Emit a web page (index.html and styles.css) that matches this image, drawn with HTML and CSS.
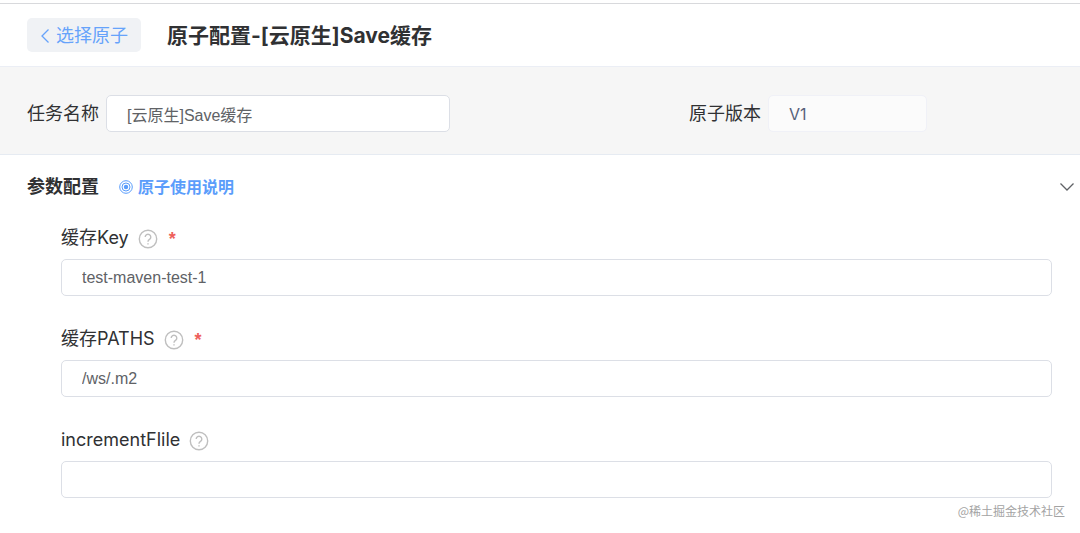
FILE: index.html
```html
<!DOCTYPE html>
<html lang="zh-CN">
  <head>
    <meta charset="UTF-8" />
    <meta name="viewport" content="width=device-width, initial-scale=1.0" />
    <title>原子配置</title>
    <link rel="stylesheet" href="styles.css">
  </head>
  <body>
    <header class="header">
      <button type="button" class="back">
        <svg width="10" height="16" viewBox="0 0 10 16"><path d="M8.5 1.5L2 8l6.5 6.5" /></svg>
        选择原子
      </button>
      <h1>原子配置-[云原生]Save缓存</h1>
    </header>

    <form action="#" method="post">
      <div class="basic">
        <div class="item">
          <label for="taskName">任务名称</label>
          <input type="text" id="taskName" class="task-name" value="[云原生]Save缓存" />
        </div>
        <div class="item">
          <label for="version">原子版本</label>
          <input type="text" id="version" class="version" value="V1" disabled />
        </div>
      </div>

      <section class="params">
        <div class="params-title">
          <h2>参数配置</h2>
          <a href="#" class="doc">
            <svg width="14" height="14" viewBox="0 0 14 14">
              <circle cx="7" cy="7" r="6.3" />
              <circle cx="7" cy="7" r="4" />
              <circle class="dot" cx="7" cy="7" r="2.2" />
            </svg>
            原子使用说明
          </a>
          <button type="button" class="toggle" aria-label="收起">
            <svg width="16" height="10" viewBox="0 0 16 10"><path d="M1.5 1.5L8 8l6.5-6.5" /></svg>
          </button>
        </div>

        <div class="field">
          <div class="field-label">
            <label for="cacheKey">缓存Key</label>
            <svg class="help" width="20" height="20" viewBox="0 0 20 20">
              <circle cx="10" cy="10" r="8.7" />
              <path d="M7.2 8a2.8 2.8 0 1 1 4.3 2.4c-1 .7-1.5 1.2-1.5 2.3" />
              <path d="M10 14.2v1.4" />
            </svg>
            <span class="required">*</span>
          </div>
          <input type="text" id="cacheKey" value="test-maven-test-1" required />
        </div>

        <div class="field">
          <div class="field-label">
            <label for="cachePaths">缓存PATHS</label>
            <svg class="help" width="20" height="20" viewBox="0 0 20 20">
              <circle cx="10" cy="10" r="8.7" />
              <path d="M7.2 8a2.8 2.8 0 1 1 4.3 2.4c-1 .7-1.5 1.2-1.5 2.3" />
              <path d="M10 14.2v1.4" />
            </svg>
            <span class="required">*</span>
          </div>
          <input type="text" id="cachePaths" value="/ws/.m2" required />
        </div>

        <div class="field">
          <div class="field-label">
            <label for="incrementFile">incrementFlile</label>
            <svg class="help" width="20" height="20" viewBox="0 0 20 20">
              <circle cx="10" cy="10" r="8.7" />
              <path d="M7.2 8a2.8 2.8 0 1 1 4.3 2.4c-1 .7-1.5 1.2-1.5 2.3" />
              <path d="M10 14.2v1.4" />
            </svg>
          </div>
          <input type="text" id="incrementFile" />
        </div>
      </section>
    </form>

    <footer class="watermark">@稀土掘金技术社区</footer>
  </body>
</html>
```
FILE: styles.css
```css
* {
  box-sizing: border-box;
}
body {
  margin: 0;
  padding-top: 3px;
  background: white;
  color: #303133;
  font-family: Inter, "Noto Sans CJK SC", sans-serif;
  font-size: 18px;
  line-height: 24px;
}
svg {
  fill: none;
  stroke: currentColor;
  flex-shrink: 0;
}
button {
  border: none;
  cursor: pointer;
}
h1,
h2 {
  margin: 0;
}
.header {
  display: flex;
  align-items: center;
  gap: 26px;
  padding: 14px 27px;
  border-top: 1px solid #d8d9dc;
  border-bottom: 1px solid #ebeef5;
}
.back {
  display: flex;
  align-items: center;
  gap: 6px;
  height: 34px;
  padding: 1px 13px 0;
  border-radius: 5px;
  background: #f0f2f5;
  color: #66a3fb;
  font: inherit;
}
.back svg {
  stroke-width: 1.3;
}
h1 {
  padding-top: 2px;
  font-size: 21px;
  font-weight: 700;
}
.basic {
  display: grid;
  grid-template-columns: 20fr 11fr;
  padding: 28px 27px 22px;
  border-bottom: 1px solid #e6ebf2;
  background: #f6f6f6;
}
.item {
  display: flex;
  align-items: center;
  gap: 7px;
}
.item label {
  white-space: nowrap;
}
input {
  width: 100%;
  height: 37px;
  padding: 0 20px;
  border: 1px solid #dcdfe6;
  border-radius: 5px;
  background: white;
  color: #606266;
  font-family: "Liberation Sans", "Noto Sans CJK SC", sans-serif;
  font-size: 16px;
}
.task-name {
  width: 344px;
}
.version {
  width: 159px;
  border-color: #f0f1f7;
  background: #fbfbfb;
  color: #56617a;
  font-family: Inter, sans-serif;
}
.params {
  padding: 20px 28px 36px 27px;
}
.params-title {
  display: flex;
  align-items: center;
  margin-right: -23px;
}
h2 {
  font-size: 18px;
  font-weight: 700;
}
.doc {
  display: flex;
  align-items: center;
  gap: 5px;
  margin-left: 20px;
  color: #5b9dfb;
  font-size: 16px;
  font-weight: 600;
  text-decoration: none;
}
.doc .dot {
  fill: currentColor;
  stroke: none;
}
.toggle {
  display: flex;
  margin-left: auto;
  padding: 0;
  background: none;
  color: #606266;
}
.toggle svg {
  stroke-width: 1.3;
}
.field {
  margin: 30px 0 0 34px;
}
.params-title + .field {
  margin-top: 26px;
}
.field-label {
  display: flex;
  align-items: center;
  gap: 9px;
  height: 25px;
  margin-bottom: 9px;
}
.help {
  margin-top: 2px;
  color: #bfbfbf;
  stroke-width: 1.4;
}
.required {
  padding-top: 2px;
  margin-left: 2px;
  color: #ee5f5b;
  font-family: "Liberation Sans", sans-serif;
  font-weight: 700;
}
.watermark {
  position: absolute;
  right: 15px;
  bottom: 10px;
  color: #a3a3a3;
  font-family: "Noto Sans CJK SC", sans-serif;
  font-size: 12px;
}
```
